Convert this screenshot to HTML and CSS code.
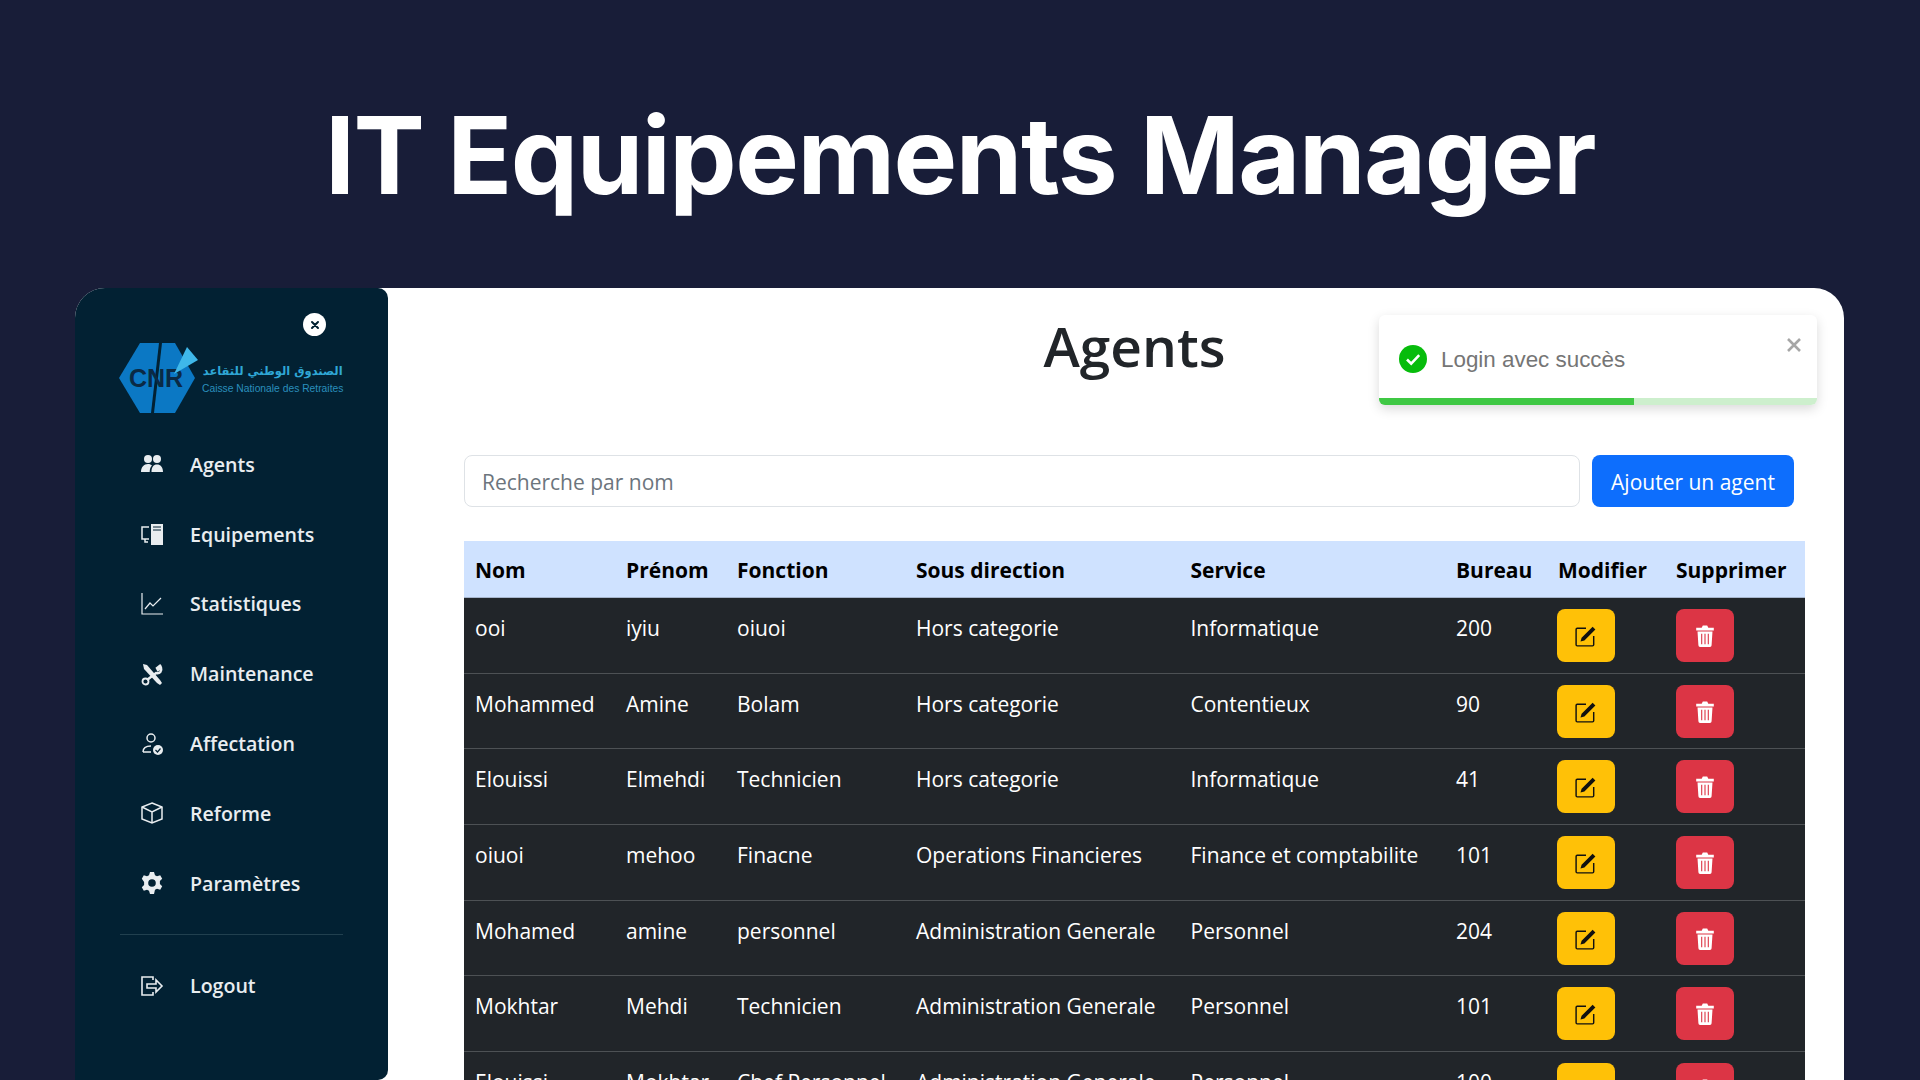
FILE: index.html
```html
<!DOCTYPE html>
<html lang="en">
<head>
    <meta charset="UTF-8">
    <meta name="viewport" content="width=device-width, initial-scale=1.0">
    <title>IT Equipements Manager</title>
    <link rel="stylesheet" href="styles.css">
</head>
<body>
    <h1 class="banner">IT Equipements Manager</h1>

    <div class="app">
        <aside class="sidebar">
            <div class="close-row">
                <button class="close-btn">
                    <svg viewBox="0 0 12 12" width="12" height="12"><path d="M3 3l6 6M9 3l-6 6" stroke="#012030" stroke-width="2" stroke-linecap="round"/></svg>
                </button>
            </div>
            <div class="logo">
                <svg class="logo-mark" viewBox="0 0 80 70" width="80" height="70">
                    <path d="M21 0H56L76 35L56 70H21L0 35Z" fill="#0b78c4"/>
                    <path d="M40 0H43L35 70H32Z" fill="#022133"/>
                    <text x="10" y="44" class="logo-cnr">CNR</text>
                    <path d="M55 31L68 4L79 17Z" fill="#3fb8ea"/>
                </svg>
                <div class="logo-text">
                    <span class="logo-ar" dir="rtl">الصندوق الوطني للتقاعد</span>
                    <span class="logo-fr">Caisse Nationale des Retraites</span>
                </div>
            </div>
            <nav class="menu">
                <a class="menu-item" href="#">
                    <svg viewBox="0 0 24 24"><circle cx="8" cy="7" r="4" fill="currentColor"/><circle cx="17" cy="7" r="4" fill="currentColor"/><path d="M1 20c0-5 3-8 7-8 2 0 3 .6 4 1.6-1.6 1.500-2.300 3.800-2.300 6.400ZM11.500 20c0-5 2-7.500 5.500-7.500s6 2.500 6 7.500Z" fill="currentColor"/></svg>
                    Agents
                </a>
                <a class="menu-item" href="#">
                    <svg viewBox="0 0 24 24"><path d="M9 5H2v12h3v3h3M5 17h4" fill="none" stroke="currentColor" stroke-width="1.500"/><path d="M11 2h12v21H11Z" fill="currentColor"/><path d="M13 5h8M13 8h8" stroke="#022133" stroke-width="1"/></svg>
                    Equipements
                </a>
                <a class="menu-item" href="#">
                    <svg viewBox="0 0 24 24" fill="none" stroke="currentColor" stroke-width="1.200"><path d="M2 1v21h21"/><path d="M5 17l5-6 3 3 8-8"/></svg>
                    Statistiques
                </a>
                <a class="menu-item" href="#">
                    <svg viewBox="0 0 24 24"><path d="M3 2l4 1 13 15 2 3-2 2-3-2L4 7Z" fill="currentColor"/><path d="M21 3l-4 3 1 2 3-2c1 3-1 6-5 5L7 18" fill="none" stroke="currentColor" stroke-width="2.500"/><circle cx="5.500" cy="19.500" r="3" fill="none" stroke="currentColor" stroke-width="1.800"/></svg>
                    Maintenance
                </a>
                <a class="menu-item" href="#">
                    <svg viewBox="0 0 24 24" fill="none" stroke="currentColor" stroke-width="1.500"><circle cx="11" cy="6" r="4"/><path d="M3 20c0-4 3-6 8-6M3 20h8"/><circle cx="18" cy="18" r="5" fill="currentColor" stroke="none"/><path d="M15.500 18l2 2 3-3.500" stroke="#022133" stroke-width="1.200"/></svg>
                    Affectation
                </a>
                <a class="menu-item" href="#">
                    <svg viewBox="0 0 24 24" fill="none" stroke="currentColor" stroke-width="1.500"><path d="M12 2l10 4v12l-10 4-10-4V6Z"/><path d="M2 6l10 5 10-5M12 11v11"/></svg>
                    Reforme
                </a>
                <a class="menu-item" href="#">
                    <svg viewBox="0 0 24 24"><path fill-rule="evenodd" d="M10 1h4l1 3.200 2 1 3.200-1 2 3.500-2.300 2.400v2.800l2.300 2.400-2 3.500-3.200-1-2 1L14 23h-4l-1-3.200-2-1-3.200 1-2-3.500 2.300-2.400v-2.800L1.800 7.700l2-3.500 3.200 1 2-1ZM12 8.200a3.800 3.800 0 1 0 0 7.600a3.800 3.800 0 0 0 0-7.600Z" fill="currentColor"/></svg>
                    Paramètres
                </a>
                <hr class="menu-sep">
                <a class="menu-item" href="#">
                    <svg viewBox="0 0 24 24" fill="none" stroke="currentColor" stroke-width="1.600"><path d="M13 6V3H2v18h11v-3"/><path d="M7 10h9V6l6 6-6 6v-4H7Z"/></svg>
                    Logout
                </a>
            </nav>
        </aside>

        <main class="content">
            <h2 class="page-title">Agents</h2>

            <div class="search-row">
                <input class="search-input" type="text" placeholder="Recherche par nom">
                <button class="add-btn">Ajouter un agent</button>
            </div>

            <table class="agents">
                <colgroup>
                    <col class="c-nom"><col class="c-prenom"><col class="c-fonction"><col class="c-sous"><col class="c-service"><col class="c-bureau"><col class="c-modif"><col class="c-suppr">
                </colgroup>
                <thead>
                    <tr><th>Nom</th><th>Prénom</th><th>Fonction</th><th>Sous direction</th><th>Service</th><th>Bureau</th><th>Modifier</th><th>Supprimer</th></tr>
                </thead>
                <tbody id="rows"></tbody>
            </table>

            <div class="toast">
                <div class="toast-body">
                    <svg viewBox="0 0 28 28" width="28" height="28"><circle cx="14" cy="14" r="14" fill="#07bc0c"/><path d="M8 14.500l4.200 4.200 8-8.500" fill="none" stroke="#fff" stroke-width="2.600"/></svg>
                    <span>Login avec succès</span>
                </div>
                <svg class="toast-close" viewBox="0 0 14 14" width="14" height="14"><path d="M1 1l12 12M13 1L1 13" stroke="#a6a6a6" stroke-width="2.600"/></svg>
                <div class="toast-track"><div class="toast-bar"></div></div>
            </div>
        </main>
    </div>

    <script src="rows.js"></script>
</body>
</html>
```

FILE: styles.css
```css
* {
    box-sizing: border-box;
}
html, body {
    height: 100%;
}
body {
    margin: 0;
    background: #181d38;
    font-family: 'Open Sans', 'Noto Sans', sans-serif;
    color: #212529;
    overflow: hidden;
}
.banner {
    margin: 0;
    height: 288px;
    padding-top: 95px;
    text-align: center;
    font-family: 'Inter', sans-serif;
    font-size: 107px;
    line-height: 120px;
    font-weight: 700;
    letter-spacing: -1.500px;
    color: #fff;
}
.app {
    display: flex;
    margin-left: 75px;
    width: 1769px;
    height: 792px;
    background: #fff;
    border-radius: 30px 30px 0 0;
}
.sidebar {
    width: 313px;
    flex-shrink: 0;
    background: #022133;
    border-radius: 30px 10px 10px 0;
    padding: 25px 45px 0;
    color: #e9edf0;
}
.close-row {
    display: flex;
    justify-content: flex-end;
    padding-right: 17px;
}
.close-btn {
    width: 23px;
    height: 23px;
    border: none;
    border-radius: 50%;
    background: #fff;
    padding: 0;
    display: flex;
    align-items: center;
    justify-content: center;
}
.logo {
    display: flex;
    align-items: center;
    gap: 3px;
    margin-top: 7px;
    margin-left: -1px;
}
.logo-mark {
    flex-shrink: 0;
}
.logo-cnr {
    font-family: 'Liberation Sans', sans-serif;
    font-weight: 700;
    font-size: 25px;
    fill: #0a2a45;
}
.logo-text {
    display: flex;
    flex-direction: column;
    gap: 5px;
    padding-top: 2px;
    white-space: nowrap;
}
.logo-ar {
    font-family: 'DejaVu Sans', sans-serif;
    font-weight: 700;
    font-size: 11.500px;
    color: #2fa7d6;
    text-align: center;
}
.logo-fr {
    font-family: 'Liberation Sans', sans-serif;
    font-size: 10.300px;
    color: #2a8fbd;
}
.menu {
    display: flex;
    flex-direction: column;
    margin-top: 16.500px;
}
.menu-item {
    display: flex;
    align-items: center;
    gap: 26px;
    height: 69.800px;
    padding-left: 20px;
    color: inherit;
    text-decoration: none;
    font-size: 19.600px;
    font-weight: 600;
}
.menu-item svg {
    width: 24px;
    height: 24px;
    flex-shrink: 0;
}
.menu-sep {
    width: 100%;
    margin: 16px 0 16px;
    border: none;
    border-top: 1px solid #21404f;
}
.content {
    position: relative;
    flex: 1;
    padding: 0 39px 0 76px;
}
.page-title {
    margin: 0;
    padding-top: 22px;
    height: 167px;
    text-align: center;
    font-size: 55px;
    line-height: 72px;
    font-weight: 550;
}
.search-row {
    display: flex;
    gap: 12px;
    height: 52px;
    padding-right: 11px;
    margin-bottom: 34px;
}
.search-input {
    flex: 1;
    border: 1px solid #dee2e6;
    border-radius: 8px;
    padding: 2px 17px 0;
    font-family: inherit;
    font-size: 21px;
}
.search-input::placeholder {
    color: #6c757d;
}
.add-btn {
    width: 202px;
    padding: 2px 0 0;
    border: none;
    border-radius: 8px;
    background: #0d6efd;
    color: #fff;
    font-family: inherit;
    font-size: 21px;
}
.agents {
    width: 1341px;
    border-collapse: separate;
    border-spacing: 0;
    table-layout: fixed;
    font-size: 21px;
}
.c-nom { width: 151px; }
.c-prenom { width: 111px; }
.c-fonction { width: 179px; }
.c-sous { width: 274.500px; }
.c-service { width: 265.500px; }
.c-bureau { width: 102px; }
.c-modif { width: 118px; }
.c-suppr { width: 140px; }
.agents th {
    height: 57px;
    padding: 1px 11px 0;
    text-align: left;
    white-space: nowrap;
    background: #cfe2ff;
    color: #000;
    font-weight: 700;
    border-bottom: 1px solid #a6b5cc;
}
.agents td {
    height: 76px;
    padding: 11px 11px 10px;
    vertical-align: top;
    white-space: nowrap;
    background: #212529;
    color: #fff;
    line-height: 38px;
    border-bottom: 1px solid #4d5154;
}
.agents tr:nth-child(3n+2) td {
    height: 75px;
}
.icon-btn {
    display: flex;
    align-items: center;
    justify-content: center;
    width: 58px;
    height: 53px;
    padding: 0;
    border: none;
    border-radius: 8px;
}
.icon-btn svg {
    width: 22px;
    height: 22px;
}
.btn-edit {
    margin-left: -1px;
    background: #ffc107;
}
.btn-del {
    background: #dc3545;
}
.toast {
    position: absolute;
    left: 991px;
    top: 27px;
    width: 438px;
    height: 90px;
    background: #fff;
    border-radius: 6px;
    box-shadow: 0 4px 12px rgba(0,0,0,0.15);
    overflow: hidden;
    font-family: 'Liberation Sans', sans-serif;
    color: #757575;
}
.toast-body {
    display: flex;
    align-items: center;
    gap: 14px;
    padding: 30px 20px 0;
    font-size: 22.400px;
}
.toast-body span {
    padding-top: 1px;
}
.toast-close {
    position: absolute;
    right: 16px;
    top: 23px;
}
.toast-track {
    position: absolute;
    left: 0;
    right: 0;
    bottom: 0;
    height: 7px;
    background: #cdefcd;
}
.toast-bar {
    width: 255px;
    height: 100%;
    background: #3fc844;
}
```

FILE: rows.js
```js
const agents = [
    ["ooi", "iyiu", "oiuoi", "Hors categorie", "Informatique", "200"],
    ["Mohammed", "Amine", "Bolam", "Hors categorie", "Contentieux", "90"],
    ["Elouissi", "Elmehdi", "Technicien", "Hors categorie", "Informatique", "41"],
    ["oiuoi", "mehoo", "Finacne", "Operations Financieres", "Finance et comptabilite", "101"],
    ["Mohamed", "amine", "personnel", "Administration Generale", "Personnel", "204"],
    ["Mokhtar", "Mehdi", "Technicien", "Administration Generale", "Personnel", "101"],
    ["Elouissi", "Mokhtar", "Chef Personnel", "Administration Generale", "Personnel", "100"]
];

const editIcon = '<svg viewBox="0 0 20 20"><path d="M10 3H2q-1 0-1 1v14q0 1 1 1h14q1 0 1-1v-8" fill="none" stroke="#111" stroke-width="1.300"/><path d="M5 15l1-3.500L16 1.500l2.500 2.500L8.500 14Z" fill="#111"/></svg>';
const trashIcon = '<svg viewBox="0 0 20 20"><path d="M2 2.500h5l1-2h4l1 2h5v2.500H2ZM3.200 6h13.600l-.8 12.500q-.1 1.500-1.500 1.500H5.500q-1.400 0-1.500-1.500Z" fill="#fff"/><path d="M7 8v9.500M10 8v9.500M13 8v9.500" stroke="#dc3545" stroke-width="1"/></svg>';

let html = '';
for (const row of agents) {
    html += '<tr>';
    for (const cell of row) {
        html += `<td>${cell}</td>`;
    }
    html += `<td><button class="icon-btn btn-edit">${editIcon}</button></td>`;
    html += `<td><button class="icon-btn btn-del">${trashIcon}</button></td>`;
    html += '</tr>';
}
document.getElementById('rows').innerHTML = html;
```
